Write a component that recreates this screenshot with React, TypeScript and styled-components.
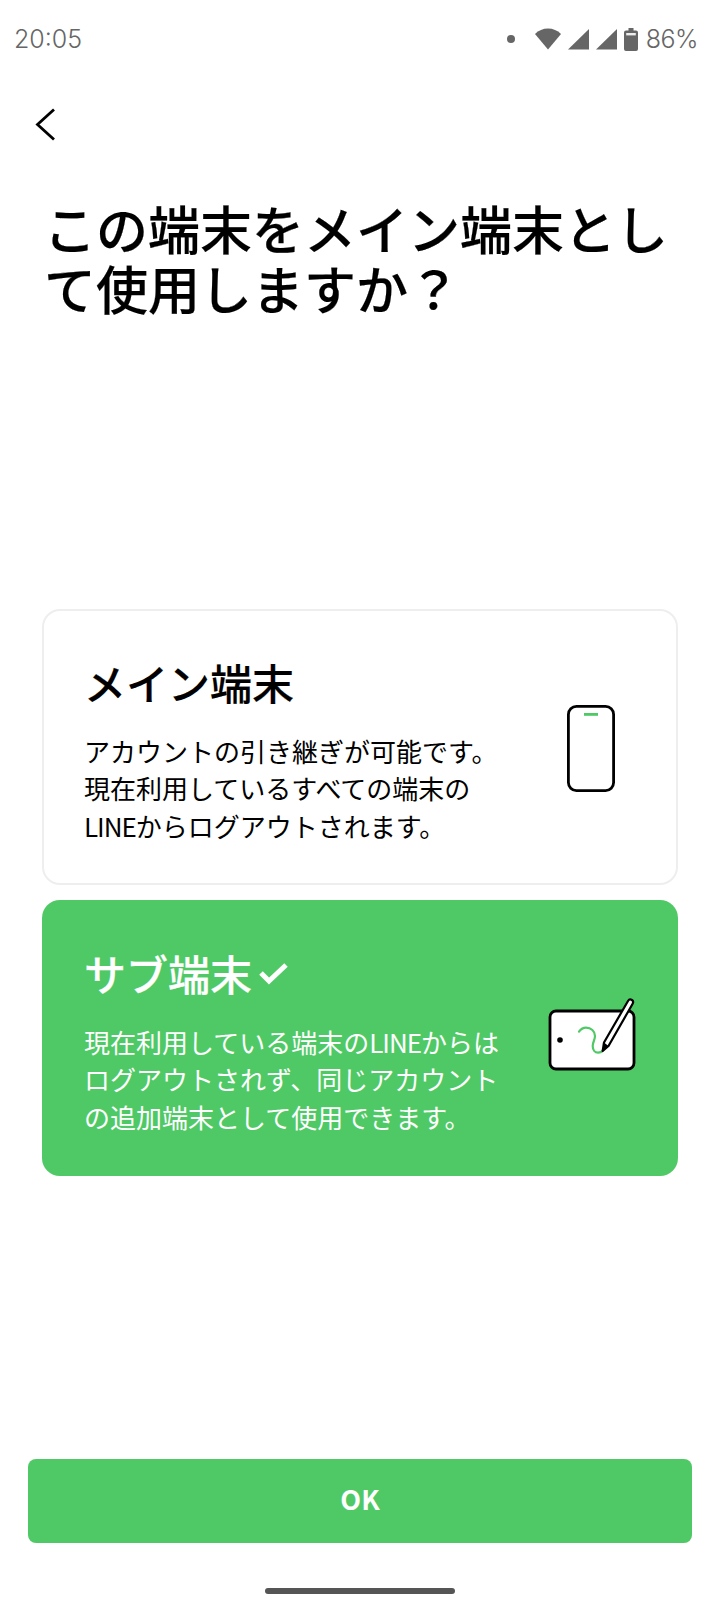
import React from 'react'
import styled, { createGlobalStyle } from 'styled-components'

const GREEN = '#4fc966'

const GlobalStyle = createGlobalStyle`
    html, body {
        margin: 0;
        padding: 0;
        background: #fff;
    }
    * {
        box-sizing: border-box;
    }
`

function WifiIcon() {
    return (
        <svg width="26" height="22" viewBox="0 0 26 22">
            <path d="M0 6 C3.6 2.2 8 0.4 13 0.4 C18 0.4 22.4 2.2 26 6 L13 21.5 Z" fill="#666" />
        </svg>
    )
}

function SignalIcon() {
    return (
        <svg width="21" height="21" viewBox="0 0 21 21">
            <path d="M0 20.5 L21 0 L21 20.5 Z" fill="#666" />
        </svg>
    )
}

function BatteryIcon() {
    return (
        <svg width="14" height="23" viewBox="0 0 14 23">
            <path d="M4.5 0 H9.5 V2.5 H12 Q14 2.5 14 4.5 V21 Q14 23 12 23 H2 Q0 23 0 21 V4.5 Q0 2.5 2 2.5 H4.5 Z" fill="#666" />
            <rect x="2.2" y="5" width="9.6" height="2.4" fill="#eee" />
        </svg>
    )
}

function PhoneIcon() {
    return (
        <svg width="48" height="87" viewBox="0 0 48 87">
            <rect x="1.4" y="1.4" width="45.2" height="84.2" rx="8" fill="#fff" stroke="#000" strokeWidth="2.8" />
            <rect x="17" y="8" width="14" height="2.8" fill={GREEN} />
        </svg>
    )
}

function TabletIcon() {
    return (
        <svg width="92" height="76" viewBox="0 0 92 76">
            <rect x="4" y="14" width="84" height="58" rx="6" fill="#fff" stroke="#000" strokeWidth="2.8" />
            <circle cx="14" cy="43" r="2.8" fill="#000" />
            <path d="M33 34.7 C35 32 37.5 30.7 40 30.7 C45 30.7 49 34 49 39 C49 43 46.7 45 46.7 49 C46.7 53 49 55.7 52 55.7 C54 55.7 56 55 57 53" fill="none" stroke={GREEN} strokeWidth="2.2" strokeLinecap="round" />
            <path d="M56.7 54 L58 45.5 L82 4 Q83.5 1.5 86 3 Q88 4.5 86.5 7 L62.5 49 Z" fill="#fff" stroke="#000" strokeWidth="2.2" strokeLinejoin="round" />
            <path d="M56.7 54 L58 45.5 L62.5 49 Z" fill="#000" />
        </svg>
    )
}

function CheckIcon() {
    return (
        <svg width="31" height="24" viewBox="0 0 31 24">
            <path d="M3 12 L11 20 L28 4" fill="none" stroke="#fff" strokeWidth="5" />
        </svg>
    )
}

const Page = styled.div`
    width: 720px;
    height: 1612px;
    display: flex;
    flex-direction: column;
    background: #fff;
    overflow: hidden;
    font-family: "Noto Sans CJK JP", "Noto Sans", sans-serif;
`

const StatusBar = styled.div`
    height: 78px;
    padding: 0 22px 0 14px;
    display: flex;
    align-items: center;
    justify-content: space-between;
    color: #666;
    font-family: Inter, "Noto Sans", sans-serif;
    font-size: 25px;
    font-weight: 300;
`

const StatusIcons = styled.div`
    display: flex;
    align-items: center;
    gap: 7px;
`

const Dot = styled.span`
    width: 8px;
    height: 8px;
    border-radius: 50%;
    background: #666;
    margin-right: 13px;
`

const BatteryLevel = styled.span`
    margin-left: 1px;
    letter-spacing: -0.5px;
`

const NavBar = styled.div`
    height: 90px;
    padding: 4px 0 0 34px;
    display: flex;
    align-items: center;
`

const Title = styled.h1`
    margin: 30px 0 0;
    padding: 0 26px 0 44px;
    font-size: 52px;
    line-height: 60px;
    font-weight: 500;
    color: #000;
    -webkit-text-stroke: 0.2px #000;
`

const Options = styled.div`
    margin: 291px 42px 0;
    display: flex;
    flex-direction: column;
    gap: 15px;
`

const Card = styled.div<{ $selected?: boolean }>`
    height: 276px;
    padding: 0 40px 0 ${p => (p.$selected ? 42 : 40)}px;
    border-radius: 18px;
    display: flex;
    align-items: center;
    justify-content: space-between;
    background: ${p => (p.$selected ? GREEN : '#fff')};
    border: ${p => (p.$selected ? 'none' : '2px solid #eeeeee')};
    color: ${p => (p.$selected ? '#fff' : '#000')};
`

const CardText = styled.div`
    width: 430px;
    margin-top: 2px;
`

const CardTitle = styled.div`
    display: flex;
    align-items: center;
    gap: 6px;
    font-size: 42px;
    line-height: 60px;
    font-weight: 500;
    margin-bottom: 20px;
    -webkit-text-stroke: 0.2px currentColor;
`

const CardBody = styled.p`
    margin: 0;
    font-size: 26px;
    line-height: 37.5px;
    font-weight: 400;
`

const Brand = styled.span`
    letter-spacing: -1px;
`

const IconSlot = styled.div<{ $right: number; $top: number }>`
    display: flex;
    margin-right: ${p => p.$right}px;
    margin-top: ${p => p.$top}px;
`

const BackButton = styled.svg`
    display: block;
`

const Spacer = styled.div`
    flex: 1;
`

const OkButton = styled.button`
    margin: 0 28px;
    height: 84px;
    padding: 0 0 6px;
    border: none;
    border-radius: 8px;
    background: ${GREEN};
    color: #fff;
    font-family: "Noto Sans CJK JP", "Noto Sans", sans-serif;
    font-size: 27px;
    font-weight: 700;
`

const HomeArea = styled.div`
    height: 69px;
    display: flex;
    justify-content: center;
    padding-top: 45px;
`

const HomeBar = styled.div`
    width: 190px;
    height: 6px;
    border-radius: 3px;
    background: #555;
`

export default function App() {
    return (
        <Page>
            <GlobalStyle />
            <StatusBar>
                <span>20:05</span>
                <StatusIcons>
                    <Dot />
                    <WifiIcon />
                    <SignalIcon />
                    <SignalIcon />
                    <BatteryIcon />
                    <BatteryLevel>86%</BatteryLevel>
                </StatusIcons>
            </StatusBar>
            <NavBar>
                <BackButton width="24" height="36" viewBox="0 0 24 36">
                    <path d="M20 2.5 L3.5 17.5 L20 32.5" fill="none" stroke="#000" strokeWidth="2.8" />
                </BackButton>
            </NavBar>
            <Title>この端末をメイン端末として使用しますか？</Title>
            <Options>
                <Card>
                    <CardText>
                        <CardTitle>メイン端末</CardTitle>
                        <CardBody>
                            アカウントの引き継ぎが可能です。<br />
                            現在利用しているすべての端末の<br />
                            <Brand>LINE</Brand>からログアウトされます。
                        </CardBody>
                    </CardText>
                    <IconSlot $right={21} $top={2}><PhoneIcon /></IconSlot>
                </Card>
                <Card $selected>
                    <CardText>
                        <CardTitle>サブ端末<CheckIcon /></CardTitle>
                        <CardBody>
                            現在利用している端末の<Brand>LINE</Brand>からは<br />
                            ログアウトされず、同じアカウント<br />
                            の追加端末として使用できます。
                        </CardBody>
                    </CardText>
                    <IconSlot $right={0} $top={-6}><TabletIcon /></IconSlot>
                </Card>
            </Options>
            <Spacer />
            <OkButton>OK</OkButton>
            <HomeArea><HomeBar /></HomeArea>
        </Page>
    )
}
